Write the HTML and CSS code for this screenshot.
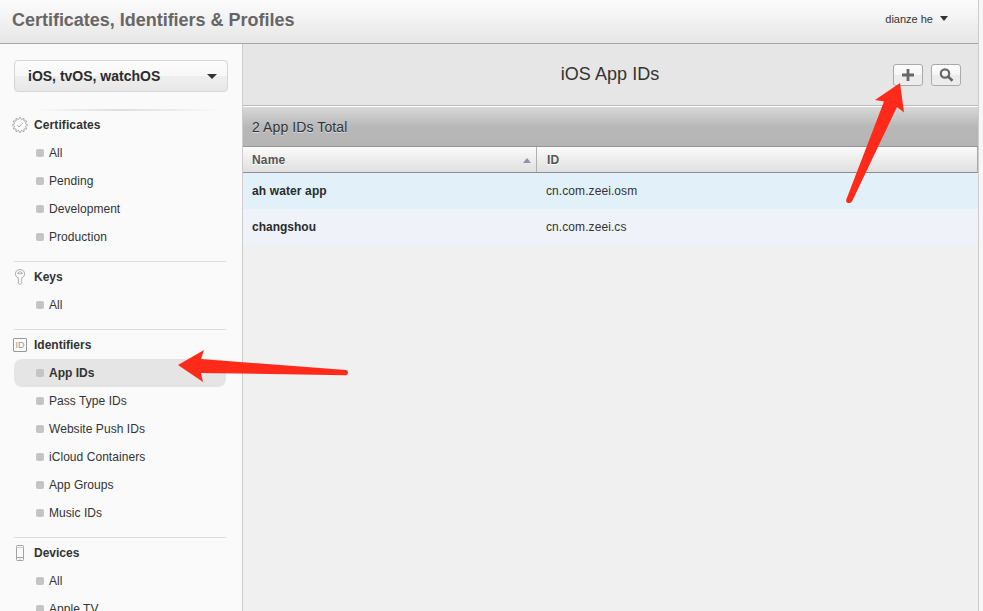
FILE: index.html
```html
<!DOCTYPE html>
<html lang="en">
<head>
<meta charset="utf-8">
<title>Certificates, Identifiers &amp; Profiles</title>
<link rel="stylesheet" href="styles.css">
</head>
<body>
<div class="window">
  <header class="topbar">
    <h1>Certificates, Identifiers &amp; Profiles</h1>
    <div class="account"><span>dianze he</span><i class="caret"></i></div>
  </header>
  <div class="body">
    <nav class="sidebar">
      <div class="platform"><span>iOS, tvOS, watchOS</span><i class="caret big"></i></div>
      <section class="group first">
        <h2><svg width="16" height="16" viewBox="0 0 16 16" fill="none" stroke="#999" stroke-width=".8"><path d="M8 .2 9.450 2.600 11.900 1.200 11.960 4.040 14.800 4.100 13.400 6.550 15.800 8 13.400 9.450 14.800 11.900 11.960 11.960 11.900 14.800 9.450 13.400 8 15.800 6.550 13.400 4.100 14.800 4.040 11.960 1.200 11.900 2.600 9.450 .2 8 2.600 6.550 1.200 4.100 4.040 4.040 4.100 1.200 6.550 2.600Z"/><path d="M5.200 8.200 7.100 10 10.800 6"/></svg><span>Certificates</span></h2>
        <ul><li>All</li><li>Pending</li><li>Development</li><li>Production</li></ul>
      </section>
      <section class="group">
        <h2><svg width="16" height="16" viewBox="0 0 16 16" fill="none" stroke="#999" stroke-width=".8"><path d="M6.300 8.800C4.200 8 3.400 6.500 3.400 4.800 3.400 2.300 5.500.5 8 .5s4.600 1.800 4.600 4.300c0 1.700-.8 3.200-2.800 4V10l-.8.8.9.8-.9.9.8.8v.7L8 15.600 6.300 14.200Z"/><path d="M5.500 4.400Q8 1 10.500 4.400Q8 5.400 5.500 4.400Z"/></svg><span>Keys</span></h2>
        <ul><li>All</li></ul>
      </section>
      <section class="group">
        <h2><svg width="16" height="16" viewBox="0 0 16 16" fill="none" stroke="#999"><rect x="1.500" y="1.500" width="13" height="13" rx=".5"/><text class="badge" x="8" y="11" text-anchor="middle">ID</text></svg><span>Identifiers</span></h2>
        <ul><li class="active">App IDs</li><li>Pass Type IDs</li><li>Website Push IDs</li><li>iCloud Containers</li><li>App Groups</li><li>Music IDs</li></ul>
      </section>
      <section class="group">
        <h2><svg width="16" height="16" viewBox="0 0 16 16" fill="none" stroke="#a3a3a3"><rect x="4.500" y=".5" width="7" height="15" rx=".8"/><path d="M4.500 2.500h7" stroke="#ccc"/><path d="M4.500 12.500h7"/><path d="M7 14.200h2" stroke-width=".5"/></svg><span>Devices</span></h2>
        <ul><li>All</li><li>Apple TV</li></ul>
      </section>
    </nav>
    <main class="content">
      <div class="toolbar">
        <h2>iOS App IDs</h2>
        <div class="actions">
          <button aria-label="Add"><svg width="28" height="20" viewBox="0 0 28 20"><path d="M14 4v12M8 10h12" stroke="#666" stroke-width="2.800"/></svg></button>
          <button aria-label="Search"><svg width="28" height="20" viewBox="0 0 28 20" fill="none" stroke="#666"><circle cx="13" cy="8.500" r="4.200" stroke-width="2.200"/><path d="M16 11.500 20.500 15.800" stroke-width="2.600"/></svg></button>
        </div>
      </div>
      <div class="summary">2 App IDs Total</div>
      <div class="row thead"><div class="name"><span>Name</span><i class="sort"></i></div><div class="id">ID</div></div>
      <div class="row hot"><div class="name"><span class="app-title">ah water app</span></div><div class="id">cn.com.zeei.osm</div></div>
      <div class="row"><div class="name">changshou</div><div class="id">cn.com.zeei.cs</div></div>
    </main>
  </div>
</div>
<svg class="arrows" width="983" height="611" viewBox="0 0 983 611" fill="#ff2a1a">
  <path d="M178 365 204 350 201 359 346 370Q348 370 348 372.500T346 375.300L201 373 203 382Z"/>
  <path d="M900 83 904 112.500 897 107 852 201.500Q850.500 203.500 848 203Q845.500 202 846.300 199.500L884 101.500 875 100Z"/>
</svg>
</body>
</html>
```
FILE: styles.css
```css
* { box-sizing: border-box; }
body {
  margin: 0;
  height: 611px;
  overflow: hidden;
  background: #f6f6f6;
  color: #333;
  font: 12px/28px "Liberation Sans", Arial, sans-serif;
}
h1, h2, ul { margin: 0; padding: 0; }
.window {
  width: 979px;
  height: 611px;
  display: flex;
  flex-direction: column;
  border-right: 1px solid #ccc;
  overflow: hidden;
}
.topbar {
  flex: none;
  height: 44px;
  padding: 0 30px 4px 12px;
  display: flex;
  align-items: center;
  justify-content: space-between;
  border-bottom: 1px solid #a6a6a6;
  background: linear-gradient(#fdfcfd, #e6e6e6);
}
.topbar h1 { color: #666; font-size: 18px; letter-spacing: -.02px; }
.account { margin-top: -2px; display: flex; align-items: center; gap: 7px; font-size: 11px; }
.caret {
  border: 4px solid transparent;
  border-top: 5px solid #333;
  border-bottom: 0;
}
.caret.big { border-width: 5px 5px 0; }
.body { flex: 1; min-height: 0; display: flex; }
.sidebar {
  flex: none;
  width: 243px;
  padding: 16px 16px 0 14px;
  border-right: 1px solid #ccc;
  background: #fafafa;
  overflow: hidden;
}
.platform {
  width: 214px;
  height: 32px;
  margin-bottom: 17px;
  padding: 0 10px 0 13px;
  display: flex;
  align-items: center;
  justify-content: space-between;
  border: 1px solid #d6d6d6;
  border-radius: 4px;
  background: linear-gradient(#fcfcfc, #f7f7f7 50%, #efefef 50%, #e7e7e7);
  color: #2b2b2b;
  font-size: 14px;
  font-weight: bold;
}
.group {
  width: 212px;
  padding: 1px 0 10px;
  border-top: 1px solid #dedede;
}
.group.first {
  border-top: 2px solid;
  border-image: linear-gradient(90deg, transparent 10%, #dedede 50%, transparent 98%) 2;
  padding-top: 0;
}
.group h2 {
  height: 28px;
  margin-left: -2px;
  display: flex;
  align-items: center;
  gap: 6px;
  font-size: 12px;
}
.group.first h2 { letter-spacing: .1px; }
.badge { fill: #999; stroke: none; font: 9px "Liberation Sans", Arial, sans-serif; letter-spacing: 0; }
.group ul { list-style: none; }
.group li {
  height: 28px;
  padding-left: 22px;
  display: flex;
  align-items: center;
  gap: 5px;
  letter-spacing: .05px;
}
.group li::before {
  content: "";
  width: 8px;
  height: 8px;
  border-radius: 2px;
  background: #c4c4c4;
}
.group li.active { border-radius: 8px; background: #e5e5e5; font-weight: bold; letter-spacing: 0; }
.content { flex: 1; min-width: 0; background: #f0f0f0; }
.toolbar {
  height: 62px;
  padding-right: 17px;
  display: grid;
  grid-template-columns: 1fr auto 1fr;
  align-items: center;
  border-bottom: 1px solid #bcbcbc;
  background: #e6e6e6;
}
.toolbar h2 { grid-column: 2; margin: -2px 0 0 16px; font-size: 18px; font-weight: normal; letter-spacing: .05px; }
.actions { justify-self: end; display: flex; gap: 8px; }
.actions button {
  width: 30px;
  height: 22px;
  padding: 0;
  border: 1px solid #aaa;
  border-radius: 3px;
  background: linear-gradient(#fdfdfd, #f5f5f5 50%, #ebebeb 50%, #ededed);
}
.actions svg { display: block; }
.summary {
  height: 41px;
  padding-left: 9px;
  border-top: 1px solid #fff;
  border-bottom: 1px solid #969696;
  background: linear-gradient(#d8d8d8, #b8b8b8 50%, #b5b5b5);
  font-size: 14px;
  letter-spacing: .1px;
  line-height: 40px;
  text-shadow: 0 1px 0 rgba(255, 255, 255, .5);
}
.row {
  height: 36px;
  display: grid;
  grid-template-columns: 294px 1fr;
  background: #eff3f9;
  line-height: 36px;
}
.row.hot { background: #e2f1f9; }
.row > div { padding-left: 9px; }
.row .id { letter-spacing: .08px; }
.name { color: #2b2b2b; font-weight: bold; }
.app-title { letter-spacing: .12px; }
.thead {
  height: 26px;
  grid-template-rows: 25px;
  border-bottom: 1px solid #8e8e8e;
  border-right: 1px solid #aaa;
  background: linear-gradient(#fcfbfc, #e0dfe0);
  line-height: 24px;
  text-shadow: 0 1px 0 #fff;
}
.thead > div { padding-top: 1px; color: #555; font-weight: bold; }
.thead .name {
  padding-right: 5px;
  display: flex;
  align-items: center;
  justify-content: space-between;
  border-right: 1px solid #b0b0b0;
}
.thead .name span { letter-spacing: .15px; }
.thead .id { padding-left: 10px; }
.sort { border: 4px solid transparent; border-top: 0; border-bottom: 5px solid #8e96a3; }
.arrows { position: absolute; left: 0; top: 0; pointer-events: none; }
```
